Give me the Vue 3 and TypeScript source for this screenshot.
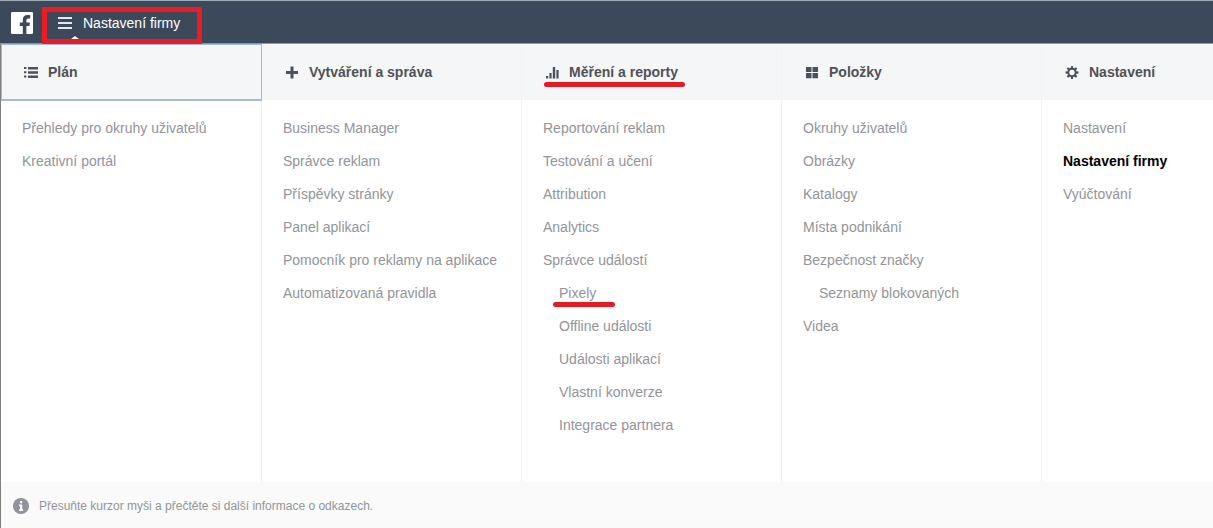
<script setup lang="ts">
interface MenuLink {
  label: string
  nested?: boolean
  current?: boolean
  marked?: boolean
}

interface MenuColumn {
  title: string
  icon: 'list' | 'plus' | 'bars' | 'grid' | 'gear'
  focused?: boolean
  marked?: boolean
  links: MenuLink[]
}

const columns: MenuColumn[] = [
  {
    title: 'Plán',
    icon: 'list',
    focused: true,
    links: [{ label: 'Přehledy pro okruhy uživatelů' }, { label: 'Kreativní portál' }],
  },
  {
    title: 'Vytváření a správa',
    icon: 'plus',
    links: [
      { label: 'Business Manager' },
      { label: 'Správce reklam' },
      { label: 'Příspěvky stránky' },
      { label: 'Panel aplikací' },
      { label: 'Pomocník pro reklamy na aplikace' },
      { label: 'Automatizovaná pravidla' },
    ],
  },
  {
    title: 'Měření a reporty',
    icon: 'bars',
    marked: true,
    links: [
      { label: 'Reportování reklam' },
      { label: 'Testování a učení' },
      { label: 'Attribution' },
      { label: 'Analytics' },
      { label: 'Správce událostí' },
      { label: 'Pixely', nested: true, marked: true },
      { label: 'Offline události', nested: true },
      { label: 'Události aplikací', nested: true },
      { label: 'Vlastní konverze', nested: true },
      { label: 'Integrace partnera', nested: true },
    ],
  },
  {
    title: 'Položky',
    icon: 'grid',
    links: [
      { label: 'Okruhy uživatelů' },
      { label: 'Obrázky' },
      { label: 'Katalogy' },
      { label: 'Místa podnikání' },
      { label: 'Bezpečnost značky' },
      { label: 'Seznamy blokovaných', nested: true },
      { label: 'Videa' },
    ],
  },
  {
    title: 'Nastavení',
    icon: 'gear',
    links: [
      { label: 'Nastavení' },
      { label: 'Nastavení firmy', current: true },
      { label: 'Vyúčtování' },
    ],
  },
]

const gearTeeth = [0, 45, 90, 135, 180, 225, 270, 315]
</script>

<template>
  <div class="page">
    <header class="topbar">
      <a class="logo" href="#" aria-label="Facebook">
        <svg width="22" height="22" viewBox="0 0 22 22">
          <path
            fill="#fff"
            d="M1.3 0H20.7Q22 0 22 1.3V20.7Q22 22 20.7 22H15.4V13.9H18.4L18.9 10.6H15.4V8.4C15.4 7.1 15.9 6.4 17.3 6.4H19.2V3.2C18.6 3.1 17.6 3 16.5 3C13.6 3 11.8 4.7 11.8 7.7V10.6H8.8V13.9H11.8V22H1.3Q0 22 0 20.7V1.3Q0 0 1.3 0Z"
          />
        </svg>
      </a>
      <button class="menu-button" type="button" aria-expanded="true">
        <svg width="14" height="12" viewBox="0 0 14 12" aria-hidden="true">
          <path d="M0 1H14M0 6H14M0 11H14" stroke="#e4e8ec" stroke-width="1.8" />
        </svg>
        <span>Nastavení firmy</span>
      </button>
    </header>

    <nav class="menu">
      <section v-for="column in columns" :key="column.title" class="column">
        <h2 class="heading" :class="{ focused: column.focused }">
          <svg class="icon" width="14" height="14" viewBox="0 0 14 14" fill="#4b515d" aria-hidden="true">
            <path
              v-if="column.icon === 'list'"
              d="M0 2H2.4V4H0ZM4 2H14V4.4H4ZM0 6.3H2.4V8.3H0ZM4 6.3H14V8.7H4ZM0 10.6H2.4V12.6H0ZM4 10.6H14V13H4Z"
            />
            <path v-else-if="column.icon === 'plus'" d="M5.5 1.5H8.5V6H13V9H8.5V13.5H5.5V9H1V6H5.5Z" />
            <path
              v-else-if="column.icon === 'bars'"
              d="M1 11H3.2V13.5H1ZM4.4 8H6.6V13.5H4.4ZM7.8 2H10.2V13.5H7.8ZM11.4 5H13.6V13.5H11.4Z"
            />
            <path
              v-else-if="column.icon === 'grid'"
              d="M1 2H6.5V7H1ZM7.5 2H13V7H7.5ZM1 8H6.5V13.3H1ZM7.5 8H13V13.3H7.5Z"
            />
            <g v-else>
              <circle cx="7" cy="7.5" r="3.7" fill="none" stroke="#4b515d" stroke-width="2" />
              <path
                v-for="angle in gearTeeth"
                :key="angle"
                d="M5.7 3.6L6.1 1H7.9L8.3 3.6Z"
                :transform="`rotate(${angle} 7 7.5)`"
              />
            </g>
          </svg>
          <span>{{ column.title }}</span>
          <i v-if="column.marked" class="underline underline-heading"></i>
        </h2>
        <ul class="links">
          <li v-for="link in column.links" :key="link.label" :class="{ nested: link.nested }">
            <a href="#" :class="{ current: link.current }" :aria-current="link.current ? 'page' : undefined">
              {{ link.label }}
              <i v-if="link.marked" class="underline underline-link"></i>
            </a>
          </li>
        </ul>
      </section>
    </nav>

    <footer class="hint">
      <svg width="16" height="16" viewBox="0 0 16 16" aria-hidden="true">
        <circle cx="8" cy="8" r="8" fill="#8f939c" />
        <path d="M7 3H9.2V5.2H7ZM6 6.5H9.2V11.5H10.2V13H6V11.5H7V8H6Z" fill="#fff" />
      </svg>
      <span>Přesuňte kurzor myši a přečtěte si další informace o odkazech.</span>
    </footer>
  </div>
</template>

<style>
body {
  margin: 0;
}
</style>

<style scoped>
.page {
  display: flex;
  flex-direction: column;
  min-height: 100vh;
  box-sizing: border-box;
  overflow: hidden;
  background: #fff;
  color: #929499;
  font-family: 'Liberation Sans', Arial, sans-serif;
  font-size: 14px;
}

.topbar {
  display: flex;
  height: 44px;
  box-sizing: border-box;
  border-top: 1px solid #a0adb9;
  border-bottom: 1px solid #8d96a1;
  background: #3b495a;
}

.logo {
  display: block;
  padding: 11px 9px 0 11px;
}

.logo svg {
  display: block;
}

.menu-button {
  position: relative;
  display: flex;
  align-items: center;
  gap: 11px;
  height: 37px;
  margin: 6px 0 0;
  padding: 0 17px 5px 11px;
  border: 5px solid #ed1c24;
  background: transparent;
  color: #fff;
  font: inherit;
  white-space: nowrap;
}

.menu-button::after {
  position: absolute;
  bottom: 0;
  left: 24px;
  border: 4px solid transparent;
  border-top: 0;
  border-bottom: 3px solid #fff;
  content: '';
}

.menu {
  display: flex;
  flex: 1;
  border-left: 1px solid #7f7f7f;
}

.column {
  flex: 0 0 260px;
  box-sizing: border-box;
  border-right: 1px solid #f0f1f2;
}

.column:first-child {
  flex-basis: 261px;
}

.column:last-child {
  flex: 1 0 auto;
  border-right: 0;
}

.heading {
  position: relative;
  display: flex;
  align-items: center;
  gap: 10px;
  height: 56px;
  box-sizing: border-box;
  margin: 0 -1px 0 0;
  padding: 0 23px;
  border-right: 1px solid #f2f3f5;
  background: #f5f6f8;
  color: #4f5257;
  font-size: 14px;
  font-weight: 700;
  white-space: nowrap;
}

.heading.focused {
  height: 57px;
  margin-bottom: -1px;
  padding: 0 22px;
  border: 1px solid #a5b9dc;
  border-bottom-width: 2px;
}

.links {
  margin: 0;
  padding: 12px 21px 40px;
  list-style: none;
}

.links li {
  line-height: 33px;
  white-space: nowrap;
}

.links .nested {
  padding-left: 16px;
}

.links a {
  position: relative;
  color: inherit;
  text-decoration: none;
}

.links .current {
  color: #000;
  font-weight: 700;
}

.underline {
  position: absolute;
  height: 5px;
  border-radius: 3px;
  background: #e31b23;
}

.underline-heading {
  bottom: 13px;
  left: 22px;
  width: 141px;
}

.underline-link {
  right: -19px;
  bottom: -6px;
  left: -6px;
}

.hint {
  display: flex;
  align-items: center;
  gap: 10px;
  height: 46px;
  box-sizing: border-box;
  padding: 2px 12px 0;
  border-left: 1px solid #7f7f7f;
  background: #fafafa;
  font-size: 12px;
}
</style>
